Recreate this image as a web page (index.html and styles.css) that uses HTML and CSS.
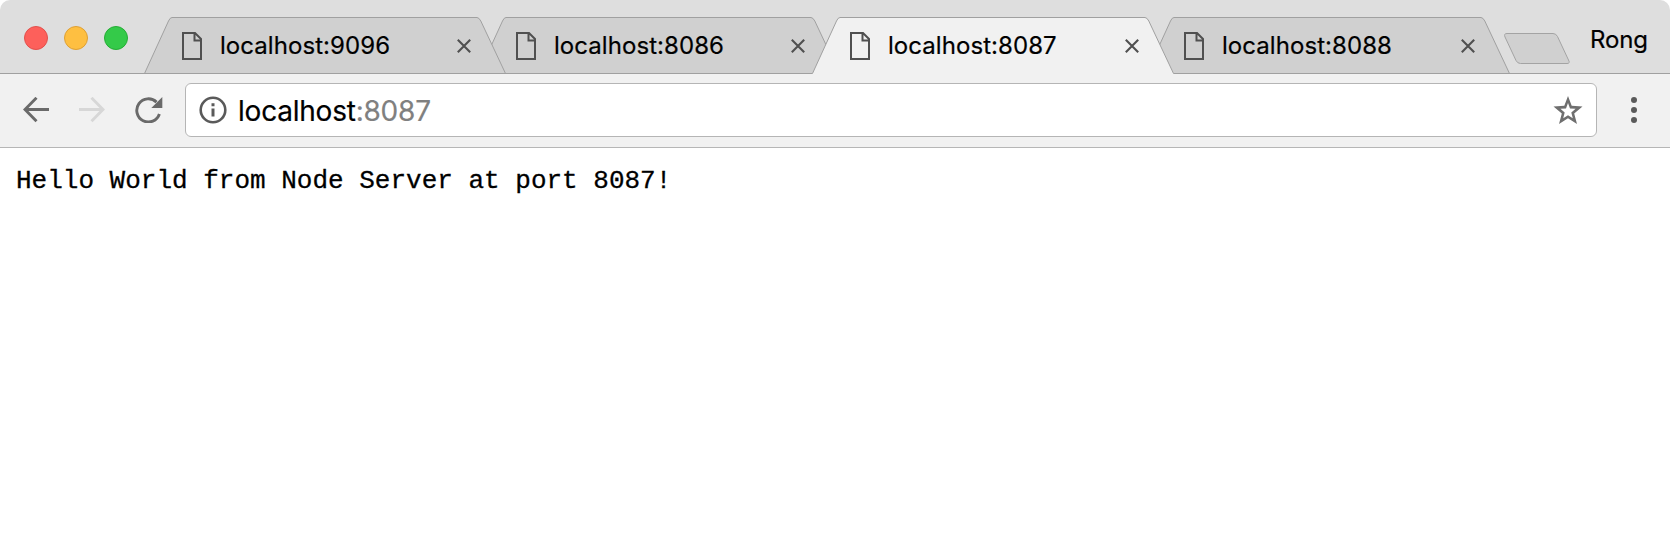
FILE: index.html
```html
<!DOCTYPE html>
<html lang="en">
<head>
<meta charset="utf-8">
<title>localhost:8087</title>
<link rel="stylesheet" href="styles.css">
</head>
<body>
<svg class="defs" width="0" height="0" aria-hidden="true">
  <symbol id="page" viewBox="0 0 20 28"><path d="M1 1h12l6 6v20H1z M12.5 1v7.5H19" fill="none" stroke="currentColor" stroke-width="2"/></symbol>
  <symbol id="close" viewBox="0 0 14 14"><path d="M.8.8l12.400 12.400M13.200.8L.8 13.200" fill="none" stroke="currentColor" stroke-width="2.1"/></symbol>
  <symbol id="shape" viewBox="0 0 362 57"><path class="fill" d="M.5 56.5L24.5 4Q26 .5 28 .5H333Q335 .5 336.800 4L361.500 56.500V57H.5z"/><path class="line" d="M.5 56.5L24.5 4Q26 .5 28 .5H333Q335 .5 336.800 4L361.500 56.500"/><path class="base" d="M0 56.500H362"/></symbol>
  <symbol id="shape-wide" viewBox="0 0 364 57"><path class="fill" d="M.5 56.5L24.5 4Q26 .5 28 .5H335Q337 .5 338.800 4L363.500 56.500V57H.5z"/><path class="line" d="M.5 56.5L24.5 4Q26 .5 28 .5H335Q337 .5 338.800 4L363.500 56.500"/><path class="base" d="M0 56.500H364"/></symbol>
</svg>
<div class="window">
  <header class="strip">
    <div class="lights"><i class="light red"></i><i class="light yellow"></i><i class="light green"></i></div>
    <nav class="tabs">
      <div class="tab first"><svg class="shape"><use href="#shape"/></svg><svg class="page"><use href="#page"/></svg><span class="title">localhost:9096</span><svg class="close"><use href="#close"/></svg></div>
      <div class="tab"><svg class="shape"><use href="#shape"/></svg><svg class="page"><use href="#page"/></svg><span class="title">localhost:8086</span><svg class="close"><use href="#close"/></svg></div>
      <div class="tab active"><svg class="shape"><use href="#shape"/></svg><svg class="page"><use href="#page"/></svg><span class="title">localhost:8087</span><svg class="close"><use href="#close"/></svg></div>
      <div class="tab wide"><svg class="shape"><use href="#shape-wide"/></svg><svg class="page"><use href="#page"/></svg><span class="title">localhost:8088</span><svg class="close"><use href="#close"/></svg></div>
    </nav>
    <svg class="newtab" viewBox="0 0 66 32"><path d="M3 .5H49Q52 .5 53.500 3.500L64.500 27Q66.500 30.500 63 30.500H16.500Q13.500 30.500 12 27.500L1 4Q-.5.5 3 .5z" fill="#d0d0d0" stroke="#a3a3a3"/></svg>
    <span class="user">Rong</span>
  </header>
  <div class="toolbar">
    <svg class="back" viewBox="0 0 26 26"><path d="M26 12.500H2M13.500.8L2 12.500l11.500 11.700" fill="none" stroke="currentColor" stroke-width="2.9"/></svg>
    <svg class="forward" viewBox="0 0 26 26"><path d="M0 12.500h24M12.500.8L24 12.500 12.500 24.200" fill="none" stroke="currentColor" stroke-width="2.9"/></svg>
    <svg class="reload" viewBox="0 0 28 26"><path d="M21.500 5.100A11.600 11.600 0 1 0 24.400 17" fill="none" stroke="currentColor" stroke-width="2.9"/><path d="M27.300 0v11H16.300z" fill="currentColor"/></svg>
    <div class="omnibox">
      <svg class="info" viewBox="0 0 28 28"><circle cx="14" cy="14" r="12.300" fill="none" stroke="currentColor" stroke-width="2.600"/><path d="M12.500 7.300h3v2.900h-3zM12.500 12.500h3v8h-3z" fill="currentColor"/></svg>
      <span class="url">localhost<span class="port">:8087</span></span>
      <svg class="star" viewBox="0 0 30 29"><path fill-rule="evenodd" d="M15 0L18.700 9.800 29.500 10.400 21.200 17.400 24 28 15 22.200 6 28 8.800 17.400.5 10.400 11.300 9.800zM15 7L13 12.400 7.400 12.800 11.700 16.500 10.200 22.200 15 19.200 19.800 22.200 18.300 16.500 22.600 12.800 17 12.400z" fill="currentColor"/></svg>
    </div>
    <svg class="menu" viewBox="0 0 6 26"><circle cx="3" cy="3" r="3"/><circle cx="3" cy="13" r="3"/><circle cx="3" cy="23" r="3"/></svg>
  </div>
  <main class="content"><pre>Hello World from Node Server at port 8087!</pre></main>
</div>
</body>
</html>
```
FILE: styles.css
```css
* { box-sizing: border-box; }
body { margin: 0; background: #fff; overflow: hidden; }
svg { display: block; flex: none; }
.defs { position: absolute; }
.window {
  width: 1670px;
  height: 544px;
  background: #fff;
  border-radius: 10px 10px 0 0;
  overflow: hidden;
  font-family: Inter, "Liberation Sans", sans-serif;
  color: #000;
}
.strip {
  display: flex;
  align-items: flex-start;
  height: 74px;
  background: #dedede;
  border-bottom: 1px solid #a0a0a0;
}
.lights { display: flex; gap: 16px; width: 144px; padding: 26px 0 0 24px; flex: none; }
.light { width: 24px; height: 24px; border-radius: 50%; border: 1px solid; }
.red { background: #fd605b; border-color: #e2504c; }
.yellow { background: #febf41; border-color: #dea035; }
.green { background: #34ca49; border-color: #25ad35; }
.tabs { display: flex; padding-top: 17px; flex: none; }
.tab {
  position: relative;
  display: flex;
  align-items: center;
  width: 362px;
  height: 57px;
  padding: 1px 35px 0 38px;
  margin-right: -28px;
  color: #505050;
}
.tab.wide { width: 364px; margin-right: 0; }
.tab.first { z-index: 1; }
.tab.active { z-index: 2; }
.shape {
  --tab: #d0d0d0;
  --base: #a0a0a0;
  position: absolute;
  left: 0;
  top: 0;
  width: 100%;
  height: 57px;
}
.active .shape { --tab: #f1f1f1; --base: transparent; }
.fill { fill: var(--tab); }
.line { fill: none; stroke: #a0a0a0; }
.base { stroke: var(--base); }
.tab:not(.active) { border-bottom: 1px solid transparent; }
.page, .title, .close { position: relative; }
.page { width: 20px; height: 28px; }
.title {
  flex: 1;
  margin-left: 18px;
  font-size: 24px;
  line-height: 30px;
  color: #000;
  letter-spacing: 0.06px;
  white-space: nowrap;
  -webkit-text-stroke: 0.2px;
}
.close { width: 14px; height: 14px; }
.newtab { width: 66px; height: 32px; margin: 33px 0 0 -6px; }
.user { margin: 25px 0 0 20px; font-size: 24px; line-height: 30px; letter-spacing: -0.1px; -webkit-text-stroke: 0.2px; }
.toolbar {
  display: flex;
  align-items: center;
  height: 74px;
  padding: 0 33px 1px 23px;
  background: #f1f1f1;
  border-bottom: 1px solid #b6b6b6;
  color: #6a6a6a;
}
.back, .forward { width: 26px; height: 26px; }
.forward { margin-left: 30px; color: #d7d7d7; }
.reload { width: 28px; height: 26px; margin-left: 30px; }
.omnibox {
  display: flex;
  align-items: center;
  flex: 1;
  height: 54px;
  margin: 0 34px 0 22px;
  padding: 0 13px;
  background: #fff;
  border: 1px solid #b5b5b5;
  border-radius: 6px;
}
.info { width: 28px; height: 28px; color: #5a5a5a; }
.url {
  flex: 1;
  margin-left: 11px;
  padding-top: 1px;
  font-size: 28px;
  line-height: 36px;
  color: #000;
  letter-spacing: -0.22px;
  white-space: nowrap;
  -webkit-text-stroke: 0.2px;
}
.port { color: #808080; }
.star { width: 30px; height: 29px; color: #6f6f6f; }
.menu { width: 6px; height: 26px; fill: #5a5a5a; }
.content { padding: 17px 16px; }
.content pre { margin: 0; font: 26px/32px "Liberation Mono", monospace; -webkit-text-stroke: 0.3px; }
```
